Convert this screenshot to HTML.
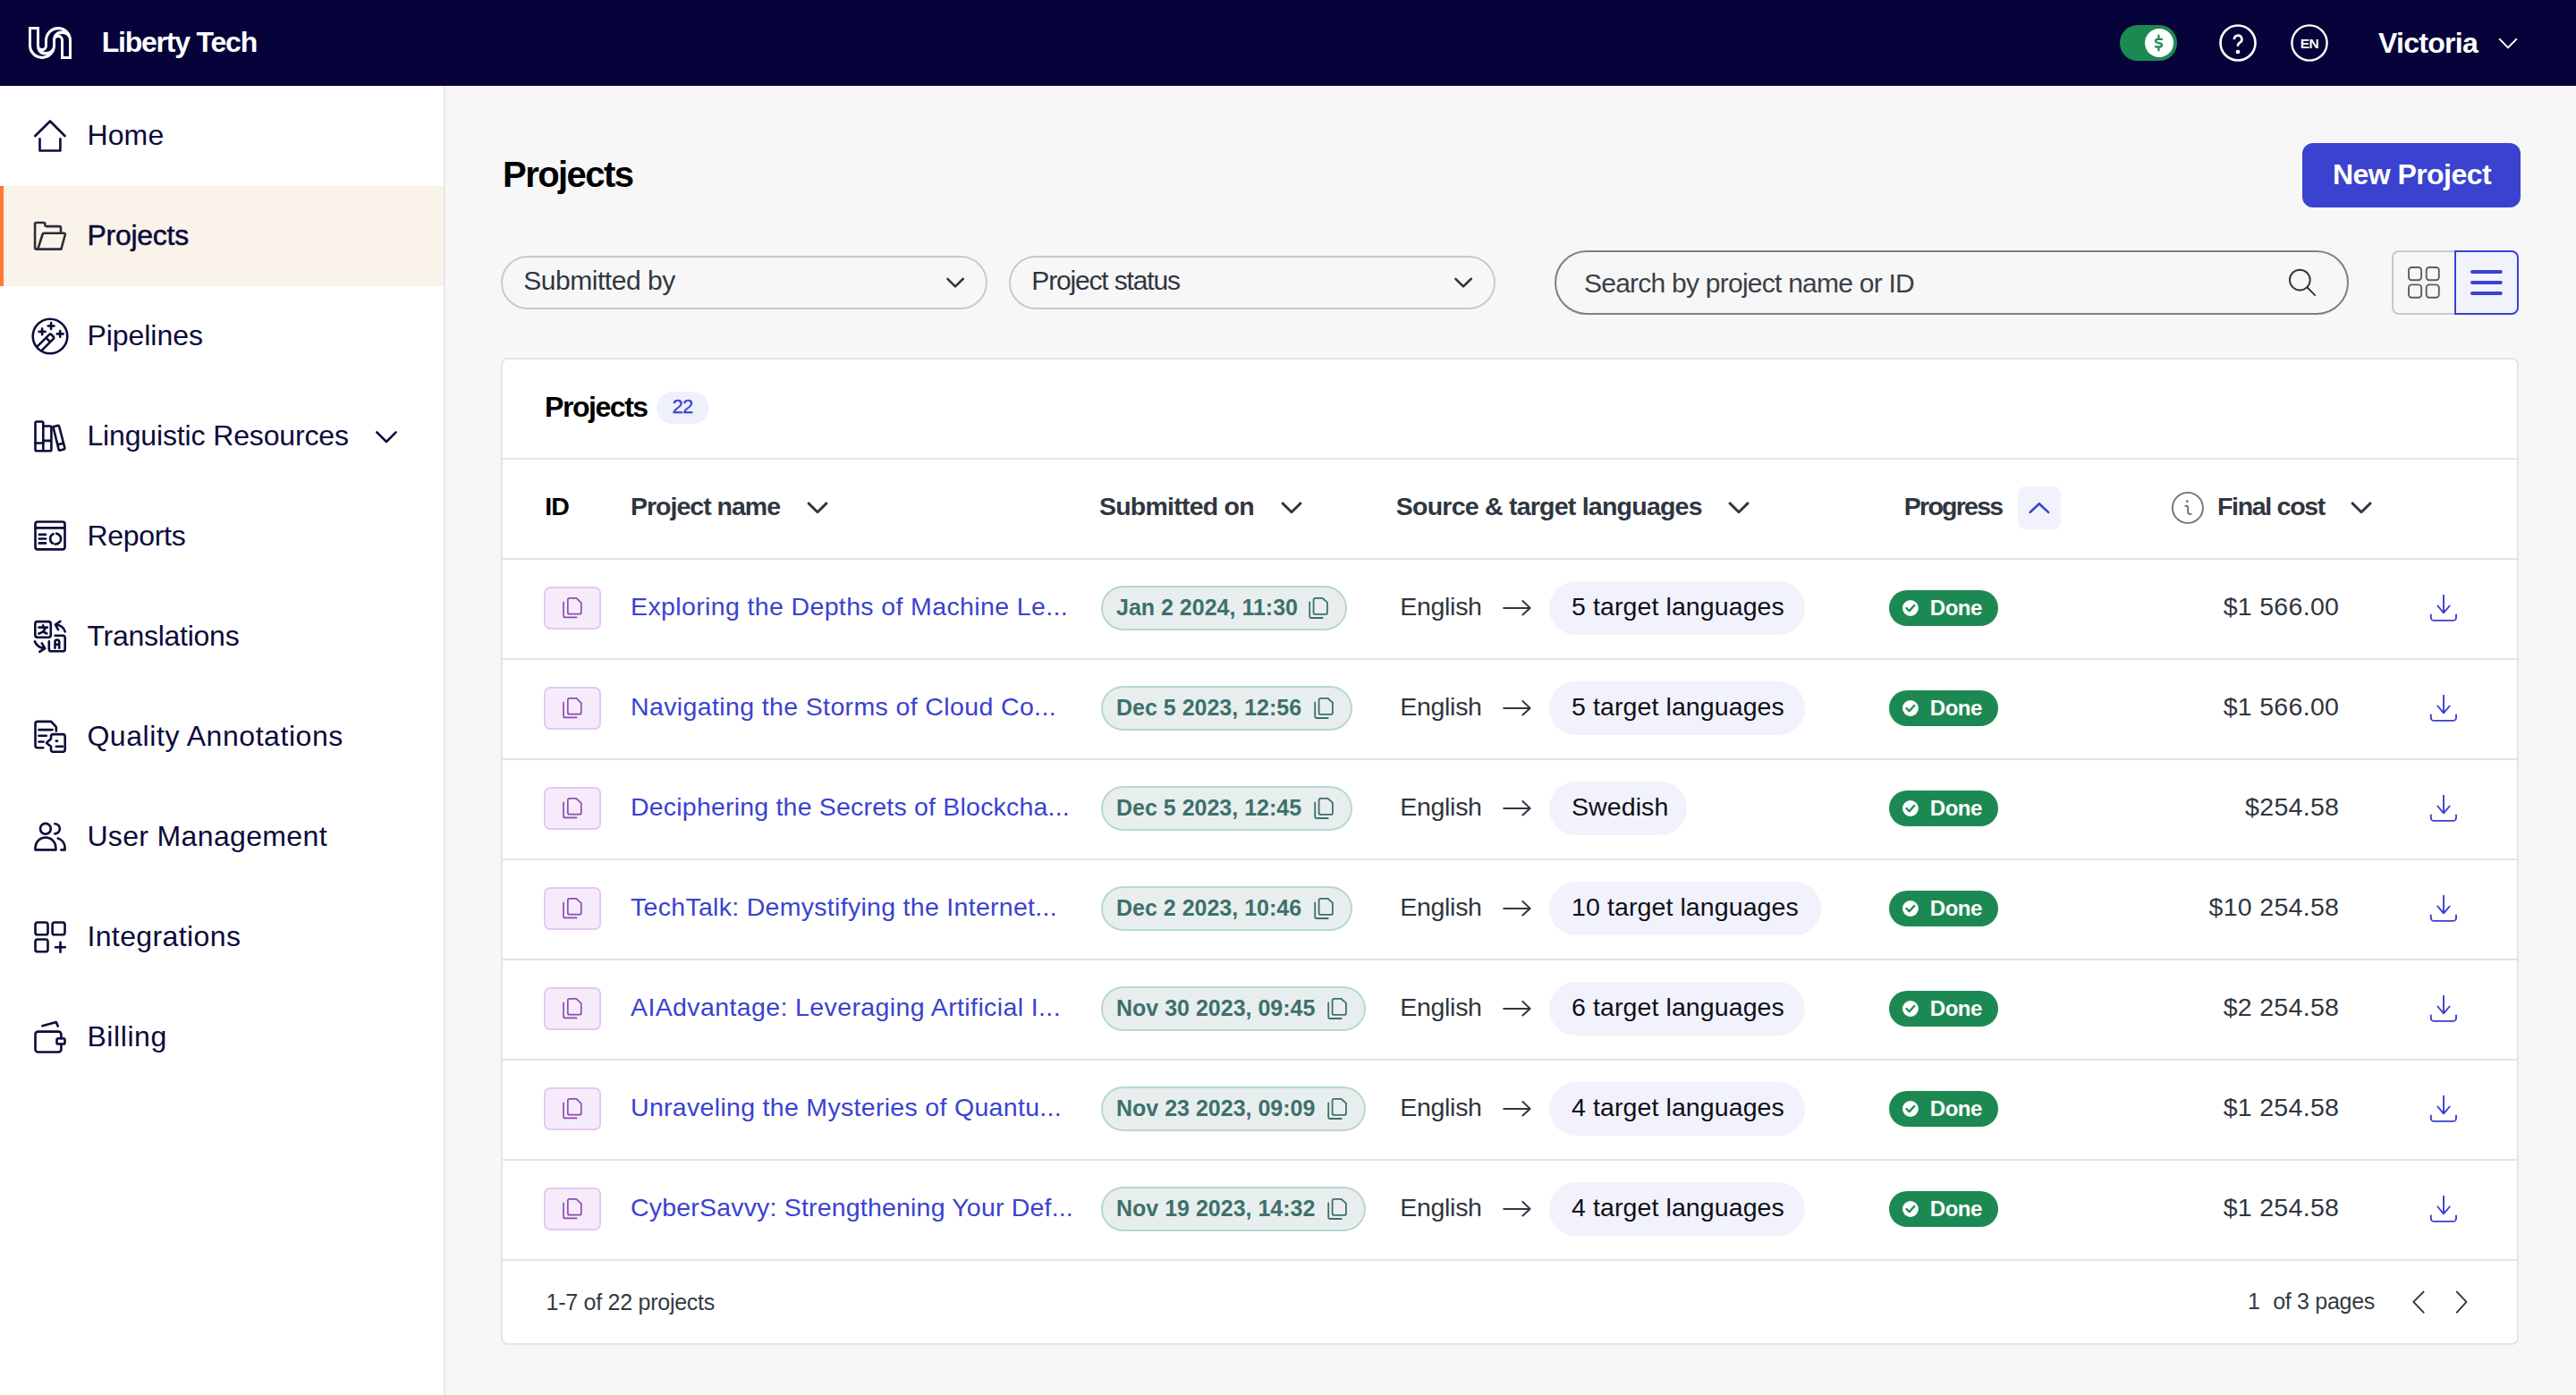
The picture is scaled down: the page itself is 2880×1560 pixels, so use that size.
<!DOCTYPE html>
<html>
<head>
<meta charset="utf-8">
<style>
*{box-sizing:border-box;margin:0;padding:0}
html,body{width:2880px;height:1560px;overflow:hidden}
body{background:#f7f7f7;font-family:"Liberation Sans",sans-serif;position:relative}
.t{position:absolute;white-space:nowrap}
.b{position:absolute}
svg{position:absolute;overflow:visible}
</style>
</head>
<body>

<div class="b" style="left:0;top:0;width:2880px;height:96px;background:#05033a"></div>
<svg style="left:32px;top:30px" width="48" height="36" viewBox="0 0 48 36">
<path fill="#fff" d="M0 0 H12 V21 A3 3 0 0 0 18 21 V18 H30 V21 A15 15 0 0 1 0 21 Z"/>
<path fill="#fff" d="M36 36 H48 V15 A15 15 0 0 0 18 15 V18 H30 V15 A3 3 0 0 1 36 15 Z"/>
<path fill="#05033a" d="M3 3 H9 V21 C9 27 13 32.5 20.4 31.4 A12 12 0 0 1 3 21 Z"/>
<path fill="#05033a" d="M21 18 H27 V21 C27 26.5 21.5 29.5 15.3 27.2 A6 6 0 0 0 21 21 Z"/>
<path fill="#05033a" d="M27 18 V15 C27 9 31 3.5 38.4 4.6 A12 12 0 0 0 21 15 V18 Z"/>
<path fill="#05033a" d="M39 33 H45 V15 C45 9.5 39.5 6.5 33.3 8.8 A6 6 0 0 1 39 15 Z"/>
</svg>
<div class="t" style="top:25.91px;font-size:32px;line-height:42px;color:#fff;font-weight:700;letter-spacing:-1.216px;left:113.70px;">Liberty Tech</div>
<div class="b" style="left:2370px;top:28px;width:64px;height:40px;border-radius:20px;background:#1d8952"></div>
<div class="b" style="left:2398px;top:32px;width:32px;height:32px;border-radius:16px;background:#fff"></div>
<svg style="left:2398px;top:32px" width="32" height="32" viewBox="0 0 32 32" fill="none" stroke="#1d8952" stroke-width="2.2" stroke-linecap="round" stroke-linejoin="round">
<path d="M15.4 7.6 V10.4 M15.4 21.4 V24.4 M19 11.8 H14.4 C12.8 11.8 12 12.7 12 13.8 C12 15.1 13 15.6 15.4 16.1 C18 16.6 19 17.3 19 18.5 C19 19.6 18.2 20.3 16.6 20.3 H11.9"/>
</svg>
<svg style="left:2480px;top:26px" width="44" height="44" viewBox="0 0 44 44" fill="none" stroke="#fff" stroke-width="2.6">
<circle cx="22" cy="22" r="19.5"/>
<path d="M17.9 18.2 A4.25 4.25 0 1 1 24.2 21.6 C22.6 22.5 22 23.1 22 24.6 V25.8" stroke-width="2.6" stroke-linecap="butt"/>
<circle cx="22" cy="32" r="2.3" fill="#fff" stroke="none"/>
</svg>
<svg style="left:2560px;top:26px" width="44" height="44" viewBox="0 0 44 44" fill="none" stroke="#fff" stroke-width="2.4">
<circle cx="22" cy="22" r="19.6"/>
</svg>
<div class="t" style="top:38.63px;font-size:15.5px;line-height:20px;color:#fff;font-weight:700;letter-spacing:-0.566px;left:2571.80px;">EN</div>
<div class="t" style="top:26.51px;font-size:32px;line-height:42px;color:#fff;font-weight:700;letter-spacing:-0.725px;left:2659.00px;">Victoria</div>
<svg style="left:2780px;top:30px" width="50" height="36" viewBox="0 0 50 36" fill="none" stroke="#fff" stroke-width="2" stroke-linecap="round" stroke-linejoin="round">
<path d="M14.8 13.9 L24 23.4 L33.3 13.9"/>
</svg>
<div class="b" style="left:0;top:96px;width:498px;height:1464px;background:#fff;border-right:2px solid #e8e8ec"></div>
<div class="b" style="left:0;top:208px;width:496px;height:112px;background:#faf3ea"></div>
<div class="b" style="left:0;top:208px;width:4px;height:112px;background:#ff7a2e"></div>
<svg style="left:30px;top:126px" width="52" height="52" viewBox="0 0 52 52" fill="none" stroke="#0b0b3b" stroke-width="2.6" stroke-linecap="round" stroke-linejoin="round"><path d="M9.3 26 L26 9.5 L42.5 26 M14.5 29.3 V42.5 H37.4 V29.3"/></svg>
<div class="t" style="top:129.81px;font-size:32px;line-height:42px;color:#0b0b3b;letter-spacing:0.159px;left:97.40px;">Home</div>
<svg style="left:30px;top:238px" width="52" height="52" viewBox="0 0 52 52" fill="none" stroke="#2a2f3a" stroke-width="2.6" stroke-linecap="round" stroke-linejoin="round"><path d="M12.3 40.6 H10.6 A1.5 1.5 0 0 1 9.1 39.1 V12.5 A1.5 1.5 0 0 1 10.6 11 H18.8 A1.5 1.5 0 0 1 20.3 12.5 V13.6 A1.5 1.5 0 0 0 21.8 15.1 H36.5 A1.5 1.5 0 0 1 38 16.6 V22.7"/><path d="M12.3 40.6 L17.6 24 A1.8 1.8 0 0 1 19.3 22.7 H41.5 A1.4 1.4 0 0 1 42.8 24.5 L38.4 40.6 Z"/></svg>
<div class="t" style="top:241.81px;font-size:32px;line-height:42px;color:#0b0b3b;letter-spacing:-0.250px;left:97.40px;-webkit-text-stroke:0.5px #0b0b3b;">Projects</div>
<svg style="left:30px;top:350px" width="52" height="52" viewBox="0 0 52 52" fill="none" stroke="#0b0b3b" stroke-width="2.6" stroke-linecap="round" stroke-linejoin="round"><circle cx="26" cy="26" r="19.3"/><path d="M27.1 11.1 V17.9 M23.7 14.5 H30.5 M17.1 17.5 V24.3 M13.7 20.9 H20.5 M37.2 20 V26.8 M33.8 23.4 H40.6"/><clipPath id="pc"><circle cx="26" cy="26" r="19.3"/></clipPath><g clip-path="url(#pc)"><g transform="matrix(0.7071 -0.7071 0.7071 0.7071 0 0)"><path d="M-22 34.79 H0.26 A2 2 0 0 1 2.26 36.79 V39.37 A2 2 0 0 1 0.26 41.37 H-22 M-4.45 34.79 V41.37"/></g></g></svg>
<div class="t" style="top:353.81px;font-size:32px;line-height:42px;color:#0b0b3b;letter-spacing:-0.041px;left:97.40px;">Pipelines</div>
<svg style="left:30px;top:462px" width="52" height="52" viewBox="0 0 52 52" fill="none" stroke="#0b0b3b" stroke-width="2.6" stroke-linecap="round" stroke-linejoin="round"><rect x="9.5" y="9.5" width="8.8" height="32.8" rx="1.6"/><path d="M9.5 33.5 H18.3"/><path d="M18.3 14.5 H25.8 A1.6 1.6 0 0 1 27.4 16.1 V40.7 A1.6 1.6 0 0 1 25.8 42.3 H18.3 M18.3 30.9 H27.4"/><path d="M29.4 15.2 L34.4 13.9 A1.5 1.5 0 0 1 36.2 15 L42.3 38.6 A1.5 1.5 0 0 1 41.2 40.4 L37.4 41.5 A1.5 1.5 0 0 1 35.6 40.4 Z M34.5 35.2 L40.4 33.7"/></svg>
<div class="t" style="top:465.81px;font-size:32px;line-height:42px;color:#0b0b3b;letter-spacing:-0.138px;left:97.40px;">Linguistic Resources</div>
<svg style="left:30px;top:574px" width="52" height="52" viewBox="0 0 52 52" fill="none" stroke="#0b0b3b" stroke-width="2.6" stroke-linecap="round" stroke-linejoin="round"><rect x="9.5" y="9.5" width="33" height="30.9" rx="2.6"/><path d="M9.5 16.4 H42.5 M13.8 23.7 H21.1 M13.8 28.5 H21.1 M13.8 33.4 H21.1"/><path d="M33.1 22.6 A6 6 0 0 1 37.74 30.55 M36.7 32.4 A6 6 0 0 1 31.58 34.48 M29.1 33.7 A6 6 0 0 1 29.56 23.06"/></svg>
<div class="t" style="top:577.81px;font-size:32px;line-height:42px;color:#0b0b3b;letter-spacing:-0.293px;left:97.40px;">Reports</div>
<svg style="left:30px;top:686px" width="52" height="52" viewBox="0 0 52 52" fill="none" stroke="#0b0b3b" stroke-width="2.6" stroke-linecap="round" stroke-linejoin="round"><rect x="9.3" y="9.1" width="17.5" height="17.6" rx="2.6"/><path d="M13.4 15.6 H22.9 M18.1 13.4 V15.6 M21 15.8 C19.5 19.8 17 21.8 13.4 22.6 M18.9 20.6 C20 21.4 21.2 22 22.4 22.4"/><path d="M42.8 20.3 C41.2 15.5 37.5 12.8 31.9 12.5 M37.4 8.9 L31.9 12.5 L35 18.2"/><path d="M31.5 24.8 H40.1 A2.6 2.6 0 0 1 42.7 27.4 V39.7 A2.6 2.6 0 0 1 40.1 42.3 H27.4 A2.6 2.6 0 0 1 24.8 39.7 V31.3"/><path d="M31.5 38.8 V31.8 A2.35 2.35 0 0 1 36.2 31.8 V38.8 M31.5 34.8 H36.2"/><path d="M8.9 31.3 C10.5 35.8 14.2 38.5 20.3 39.1 M16.8 33.4 L20.3 39.1 L14.3 42.9"/></svg>
<div class="t" style="top:689.81px;font-size:32px;line-height:42px;color:#0b0b3b;letter-spacing:-0.260px;left:97.40px;">Translations</div>
<svg style="left:30px;top:798px" width="52" height="52" viewBox="0 0 52 52" fill="none" stroke="#0b0b3b" stroke-width="2.6" stroke-linecap="round" stroke-linejoin="round"><path d="M18.3 38.2 H12 A2.5 2.5 0 0 1 9.5 35.7 V11.4 A2.5 2.5 0 0 1 12 8.9 H27.2 L32.8 14.9 V19.4"/><path d="M13.4 18.1 H28.5 M13.4 24.8 H21.8 M13.4 31.5 H18.6"/><path d="M27 28.3 V25.6 A2.5 2.5 0 0 1 29.5 23.1 H40.2 A2.5 2.5 0 0 1 42.7 25.6 V40.2 A2.5 2.5 0 0 1 40.2 42.7 H29.5 A2.5 2.5 0 0 1 27 40.2 V36.7 L22.4 33.3 A0.6 0.6 0 0 1 22.4 32.3 Z"/><path d="M32.8 30.6 H34.1 M32.8 36.7 H39.9"/></svg>
<div class="t" style="top:801.81px;font-size:32px;line-height:42px;color:#0b0b3b;letter-spacing:0.566px;left:97.40px;">Quality Annotations</div>
<svg style="left:30px;top:910px" width="52" height="52" viewBox="0 0 52 52" fill="none" stroke="#0b0b3b" stroke-width="2.6" stroke-linecap="round" stroke-linejoin="round"><circle cx="20.9" cy="16.8" r="5.9"/><path d="M9.5 40.4 V38 A11.45 11.45 0 0 1 32.4 38 V40.4 Z"/><path d="M31.3 11.2 A5.6 5.6 0 0 1 31.3 22.4"/><path d="M34.8 27.4 A11 11 0 0 1 42.5 37.5 V40.4 H38.4"/></svg>
<div class="t" style="top:913.81px;font-size:32px;line-height:42px;color:#0b0b3b;letter-spacing:0.350px;left:97.40px;">User Management</div>
<svg style="left:30px;top:1022px" width="52" height="52" viewBox="0 0 52 52" fill="none" stroke="#0b0b3b" stroke-width="2.6" stroke-linecap="round" stroke-linejoin="round"><rect x="9.5" y="9.5" width="14" height="13.8" rx="2.6"/><rect x="28.6" y="9.5" width="13.9" height="13.8" rx="2.6"/><rect x="9.5" y="28.5" width="14" height="13.8" rx="2.6"/><path d="M37.5 31.9 V42.8 M32 37.3 H42.8"/></svg>
<div class="t" style="top:1025.81px;font-size:32px;line-height:42px;color:#0b0b3b;letter-spacing:0.398px;left:97.40px;">Integrations</div>
<svg style="left:30px;top:1134px" width="52" height="52" viewBox="0 0 52 52" fill="none" stroke="#0b0b3b" stroke-width="2.6" stroke-linecap="round" stroke-linejoin="round"><path d="M38.4 27.2 V22.6 A3 3 0 0 0 35.4 19.6 H12.5 A3 3 0 0 0 9.5 22.6 V39.5 A3 3 0 0 0 12.5 42.5 H35.4 A3 3 0 0 0 38.4 39.5 V33.5"/><rect x="33.5" y="27.2" width="9" height="6.3" rx="1.6"/><path d="M17.3 13.2 L32.8 9.1 L34.7 13.6"/></svg>
<div class="t" style="top:1137.81px;font-size:32px;line-height:42px;color:#0b0b3b;letter-spacing:0.589px;left:97.40px;">Billing</div>
<svg style="left:410px;top:470px" width="44" height="36" viewBox="0 0 44 36" fill="none" stroke="#0b0b3b" stroke-width="2.6" stroke-linecap="round" stroke-linejoin="round"><path d="M11.3 13.3 L22 24 L32.6 13.3"/></svg>
<div class="t" style="top:168.74px;font-size:40px;line-height:52px;color:#000;font-weight:700;letter-spacing:-1.545px;left:562.00px;">Projects</div>
<div class="b" style="left:2574px;top:160px;width:244px;height:72px;border-radius:12px;background:#3a42cf"></div>
<div class="t" style="top:174.21px;font-size:32px;line-height:42px;color:#fff;font-weight:700;letter-spacing:-0.561px;left:2608.00px;">New Project</div>
<div class="b" style="left:560px;top:286px;width:544px;height:60px;border:2px solid #cacacd;border-radius:30px"></div>
<div class="t" style="top:294.11px;font-size:30px;line-height:39px;color:#2f3640;letter-spacing:-0.466px;left:585.30px;">Submitted by</div>
<svg style="left:1040px;top:296px" width="50" height="40" viewBox="0 0 50 40" fill="none" stroke="#2f3640" stroke-width="2.6" stroke-linecap="round" stroke-linejoin="round"><path d="M19.4 15.8 L28 24.4 L36.8 15.8"/></svg>
<div class="b" style="left:1128px;top:286px;width:544px;height:60px;border:2px solid #cacacd;border-radius:30px"></div>
<div class="t" style="top:294.11px;font-size:30px;line-height:39px;color:#2f3640;letter-spacing:-1.160px;left:1153.30px;">Project status</div>
<svg style="left:1608px;top:296px" width="50" height="40" viewBox="0 0 50 40" fill="none" stroke="#2f3640" stroke-width="2.6" stroke-linecap="round" stroke-linejoin="round"><path d="M19.4 15.8 L28 24.4 L36.8 15.8"/></svg>
<div class="b" style="left:1738px;top:280px;width:888px;height:72px;border:2px solid #7c7f85;border-radius:36px"></div>
<div class="t" style="top:296.50px;font-size:30px;line-height:39px;color:#3a3f47;letter-spacing:-0.757px;left:1771.00px;">Search by project name or ID</div>
<svg style="left:2550px;top:292px" width="50" height="50" viewBox="0 0 50 50" fill="none" stroke="#2f3640" stroke-width="1.9" stroke-linecap="round"><circle cx="21.3" cy="21.1" r="11.4"/><path d="M29.6 29.5 L38.2 38.1"/></svg>
<div class="b" style="left:2674px;top:280px;width:72px;height:72px;border:2px solid #c9c9cc;border-right:none;border-radius:8px 0 0 8px"></div>
<div class="b" style="left:2744px;top:280px;width:72px;height:72px;border:2px solid #3a42cf;border-radius:0 8px 8px 0;background:#f1f2fc"></div>
<svg style="left:2680px;top:288px" width="130" height="56" viewBox="0 0 130 56" fill="none" stroke="#5b5f66" stroke-width="1.9"><rect x="13" y="11" width="14.1" height="14.3" rx="3.2"/><rect x="32.7" y="11" width="14.1" height="14.3" rx="3.2"/><rect x="13" y="30.4" width="14.1" height="14.4" rx="3.2"/><rect x="32.7" y="30.4" width="14.1" height="14.4" rx="3.2"/><path d="M84 15.9 H115.8 M84 28 H115.8 M84 39.9 H115.8" stroke="#3a42cf" stroke-width="4" stroke-linecap="round"/></svg>
<div class="b" style="left:560px;top:400px;width:2256px;height:1104px;background:#fff;border:2px solid #e4e4e4;border-radius:8px"></div>
<div class="b" style="left:562px;top:512px;width:2252px;height:2px;background:#e3e3e3"></div>
<div class="b" style="left:562px;top:624px;width:2252px;height:2px;background:#e3e3e3"></div>
<div class="b" style="left:562px;top:736px;width:2252px;height:2px;background:#e3e3e3"></div>
<div class="b" style="left:562px;top:848px;width:2252px;height:2px;background:#e3e3e3"></div>
<div class="b" style="left:562px;top:960px;width:2252px;height:2px;background:#e3e3e3"></div>
<div class="b" style="left:562px;top:1072px;width:2252px;height:2px;background:#e3e3e3"></div>
<div class="b" style="left:562px;top:1184px;width:2252px;height:2px;background:#e3e3e3"></div>
<div class="b" style="left:562px;top:1296px;width:2252px;height:2px;background:#e3e3e3"></div>
<div class="b" style="left:562px;top:1408px;width:2252px;height:2px;background:#e3e3e3"></div>
<div class="t" style="top:434.41px;font-size:32px;line-height:42px;color:#000;font-weight:700;letter-spacing:-1.448px;left:609.00px;">Projects</div>
<div class="b" style="left:734px;top:438px;width:58px;height:36px;border-radius:18px;background:#eef0fc"></div>
<div class="t" style="top:440.48px;font-size:22px;line-height:29px;color:#3a42cf;letter-spacing:-0.886px;left:751.60px;-webkit-text-stroke:0.3px #3a42cf;">22</div>
<div class="t" style="top:548.02px;font-size:28.5px;line-height:37px;color:#000;font-weight:700;letter-spacing:-0.750px;left:609.20px;">ID</div>
<div class="t" style="top:548.02px;font-size:28.5px;line-height:37px;color:#2f3640;font-weight:700;letter-spacing:-0.999px;left:705.00px;">Project name</div>
<svg style="left:889.0px;top:548px" width="50" height="40" viewBox="0 0 50 40" fill="none" stroke="#2f3640" stroke-width="2.9" stroke-linecap="round" stroke-linejoin="round"><path d="M15 14.9 L25 24.7 L35 14.9"/></svg>
<div class="t" style="top:548.02px;font-size:28.5px;line-height:37px;color:#2f3640;font-weight:700;letter-spacing:-0.756px;left:1228.90px;">Submitted on</div>
<svg style="left:1419.0px;top:548px" width="50" height="40" viewBox="0 0 50 40" fill="none" stroke="#2f3640" stroke-width="2.9" stroke-linecap="round" stroke-linejoin="round"><path d="M15 14.9 L25 24.7 L35 14.9"/></svg>
<div class="t" style="top:548.02px;font-size:28.5px;line-height:37px;color:#2f3640;font-weight:700;letter-spacing:-0.764px;left:1560.80px;">Source &amp; target languages</div>
<svg style="left:1918.8px;top:548px" width="50" height="40" viewBox="0 0 50 40" fill="none" stroke="#2f3640" stroke-width="2.9" stroke-linecap="round" stroke-linejoin="round"><path d="M15 14.9 L25 24.7 L35 14.9"/></svg>
<div class="t" style="top:548.02px;font-size:28.5px;line-height:37px;color:#2f3640;font-weight:700;letter-spacing:-1.745px;left:2128.80px;">Progress</div>
<div class="b" style="left:2256px;top:544px;width:48px;height:48px;border-radius:8px;background:#f1f2fc"></div>
<svg style="left:2250px;top:540px" width="60" height="56" viewBox="0 0 60 56" fill="none" stroke="#3a42cf" stroke-width="2.6" stroke-linecap="round" stroke-linejoin="round"><path d="M19.7 32.9 L29.9 23.3 L40.1 32.9"/></svg>
<svg style="left:2420px;top:540px" width="60" height="56" viewBox="0 0 60 56" fill="none" stroke="#6e737a" stroke-width="1.9" stroke-linecap="round" stroke-linejoin="round"><circle cx="25.9" cy="27.9" r="17"/><circle cx="25.3" cy="20.7" r="1.4" fill="#6e737a" stroke="none"/><path d="M23.3 25.7 H24.6 A1.5 1.5 0 0 1 26.1 27.2 V31.9 A3 3 0 0 0 29.1 34.9 H29.7"/></svg>
<div class="t" style="top:548.02px;font-size:28.5px;line-height:37px;color:#2f3640;font-weight:700;letter-spacing:-1.303px;left:2479.00px;">Final cost</div>
<svg style="left:2614.5px;top:548px" width="50" height="40" viewBox="0 0 50 40" fill="none" stroke="#2f3640" stroke-width="2.9" stroke-linecap="round" stroke-linejoin="round"><path d="M15 14.9 L25 24.7 L35 14.9"/></svg>
<div class="b" style="left:608px;top:656px;width:64px;height:48px;border:2px solid #e6c8f2;border-radius:7px;background:#f6ebfb"></div>
<svg style="left:604px;top:650px" width="72" height="60" viewBox="0 0 72 60" fill="none" stroke="#8c4caf" stroke-width="1.7" stroke-linecap="round" stroke-linejoin="round"><path d="M32.6 18.9 H40.4 L45.8 24.1 V34.7 A2 2 0 0 1 43.8 36.7 H32.8 A2 2 0 0 1 30.8 34.7 V20.9 A2 2 0 0 1 32.8 18.9 Z"/><path d="M26 23.4 V38.4 A2 2 0 0 0 28 40.4 H40.6"/></svg>
<div class="t" style="top:659.52px;font-size:28.5px;line-height:37px;color:#3a42cf;letter-spacing:0.371px;left:705.00px;">Exploring the Depths of Machine Le...</div>
<div class="b" style="left:1231px;top:655px;width:275px;height:50px;border:2px solid #b9d7d1;border-radius:25px;background:#e8eeee"></div>
<div class="t" style="top:663.24px;font-size:25px;line-height:32px;color:#3e706b;font-weight:700;left:1248.00px;">Jan 2 2024, 11:30</div>
<svg style="left:1450px;top:655px" width="60" height="50" viewBox="0 0 60 50" fill="none" stroke="#3e706b" stroke-width="1.8" stroke-linecap="round" stroke-linejoin="round"><path d="M20.6 13.8 H28.3 L33.9 18.6 V29.9 A2 2 0 0 1 31.9 31.9 H20.6 A2 2 0 0 1 18.6 29.9 V15.8 A2 2 0 0 1 20.6 13.8 Z"/><path d="M14.2 18.5 V34 A2 2 0 0 0 16.2 36 H28.7"/></svg>
<div class="t" style="top:659.52px;font-size:28.5px;line-height:37px;color:#2f3640;letter-spacing:-0.283px;left:1565.20px;">English</div>
<svg style="left:1670px;top:660px" width="50" height="40" viewBox="0 0 50 40" fill="none" stroke="#2f3640" stroke-width="2" stroke-linecap="round" stroke-linejoin="round"><path d="M11.2 19.9 H40.4 M32.4 12 L40.6 19.9 L32.4 27.5"/></svg>
<div class="b" style="left:1732px;top:650px;width:286px;height:60px;border-radius:30px;background:#f1f2fc"></div>
<div class="t" style="top:659.52px;font-size:28.5px;line-height:37px;color:#101018;left:1757.00px;letter-spacing:0.1px;">5 target languages</div>
<div class="b" style="left:2112px;top:660px;width:122px;height:40px;border-radius:20px;background:#1d8952"></div>
<svg style="left:2106px;top:655px" width="60" height="50" viewBox="0 0 60 50"><circle cx="29.9" cy="25" r="8.9" fill="#fff"/><path d="M25.5 25 L28.6 28.2 L34.2 21.9" fill="none" stroke="#1d8952" stroke-width="2.3" stroke-linecap="round" stroke-linejoin="round"/></svg>
<div class="t" style="top:664.08px;font-size:24px;line-height:31px;color:#fff;font-weight:700;letter-spacing:-0.500px;left:2157.80px;">Done</div>
<div class="t" style="top:659.52px;font-size:28.5px;line-height:37px;color:#2f3640;right:264.80px;letter-spacing:0.3px;">$1 566.00</div>
<svg style="left:2700px;top:650px" width="60" height="60" viewBox="0 0 60 60" fill="none" stroke="#3a3fd0" stroke-width="1.9" stroke-linecap="round" stroke-linejoin="round"><path d="M32 15.7 V35.3 M25.4 27.5 L32 35.3 L38.7 27.5 M17.8 37.4 V40.4 A3.5 3.5 0 0 0 21.3 43.9 H42.5 A3.5 3.5 0 0 0 46 40.4 V37.4"/></svg>
<div class="b" style="left:608px;top:768px;width:64px;height:48px;border:2px solid #e6c8f2;border-radius:7px;background:#f6ebfb"></div>
<svg style="left:604px;top:762px" width="72" height="60" viewBox="0 0 72 60" fill="none" stroke="#8c4caf" stroke-width="1.7" stroke-linecap="round" stroke-linejoin="round"><path d="M32.6 18.9 H40.4 L45.8 24.1 V34.7 A2 2 0 0 1 43.8 36.7 H32.8 A2 2 0 0 1 30.8 34.7 V20.9 A2 2 0 0 1 32.8 18.9 Z"/><path d="M26 23.4 V38.4 A2 2 0 0 0 28 40.4 H40.6"/></svg>
<div class="t" style="top:771.52px;font-size:28.5px;line-height:37px;color:#3a42cf;letter-spacing:0.373px;left:705.00px;">Navigating the Storms of Cloud Co...</div>
<div class="b" style="left:1231px;top:767px;width:281px;height:50px;border:2px solid #b9d7d1;border-radius:25px;background:#e8eeee"></div>
<div class="t" style="top:775.24px;font-size:25px;line-height:32px;color:#3e706b;font-weight:700;left:1248.00px;">Dec 5 2023, 12:56</div>
<svg style="left:1456px;top:767px" width="60" height="50" viewBox="0 0 60 50" fill="none" stroke="#3e706b" stroke-width="1.8" stroke-linecap="round" stroke-linejoin="round"><path d="M20.6 13.8 H28.3 L33.9 18.6 V29.9 A2 2 0 0 1 31.9 31.9 H20.6 A2 2 0 0 1 18.6 29.9 V15.8 A2 2 0 0 1 20.6 13.8 Z"/><path d="M14.2 18.5 V34 A2 2 0 0 0 16.2 36 H28.7"/></svg>
<div class="t" style="top:771.52px;font-size:28.5px;line-height:37px;color:#2f3640;letter-spacing:-0.283px;left:1565.20px;">English</div>
<svg style="left:1670px;top:772px" width="50" height="40" viewBox="0 0 50 40" fill="none" stroke="#2f3640" stroke-width="2" stroke-linecap="round" stroke-linejoin="round"><path d="M11.2 19.9 H40.4 M32.4 12 L40.6 19.9 L32.4 27.5"/></svg>
<div class="b" style="left:1732px;top:762px;width:286px;height:60px;border-radius:30px;background:#f1f2fc"></div>
<div class="t" style="top:771.52px;font-size:28.5px;line-height:37px;color:#101018;left:1757.00px;letter-spacing:0.1px;">5 target languages</div>
<div class="b" style="left:2112px;top:772px;width:122px;height:40px;border-radius:20px;background:#1d8952"></div>
<svg style="left:2106px;top:767px" width="60" height="50" viewBox="0 0 60 50"><circle cx="29.9" cy="25" r="8.9" fill="#fff"/><path d="M25.5 25 L28.6 28.2 L34.2 21.9" fill="none" stroke="#1d8952" stroke-width="2.3" stroke-linecap="round" stroke-linejoin="round"/></svg>
<div class="t" style="top:776.08px;font-size:24px;line-height:31px;color:#fff;font-weight:700;letter-spacing:-0.500px;left:2157.80px;">Done</div>
<div class="t" style="top:771.52px;font-size:28.5px;line-height:37px;color:#2f3640;right:264.80px;letter-spacing:0.3px;">$1 566.00</div>
<svg style="left:2700px;top:762px" width="60" height="60" viewBox="0 0 60 60" fill="none" stroke="#3a3fd0" stroke-width="1.9" stroke-linecap="round" stroke-linejoin="round"><path d="M32 15.7 V35.3 M25.4 27.5 L32 35.3 L38.7 27.5 M17.8 37.4 V40.4 A3.5 3.5 0 0 0 21.3 43.9 H42.5 A3.5 3.5 0 0 0 46 40.4 V37.4"/></svg>
<div class="b" style="left:608px;top:880px;width:64px;height:48px;border:2px solid #e6c8f2;border-radius:7px;background:#f6ebfb"></div>
<svg style="left:604px;top:874px" width="72" height="60" viewBox="0 0 72 60" fill="none" stroke="#8c4caf" stroke-width="1.7" stroke-linecap="round" stroke-linejoin="round"><path d="M32.6 18.9 H40.4 L45.8 24.1 V34.7 A2 2 0 0 1 43.8 36.7 H32.8 A2 2 0 0 1 30.8 34.7 V20.9 A2 2 0 0 1 32.8 18.9 Z"/><path d="M26 23.4 V38.4 A2 2 0 0 0 28 40.4 H40.6"/></svg>
<div class="t" style="top:883.52px;font-size:28.5px;line-height:37px;color:#3a42cf;letter-spacing:0.206px;left:705.00px;">Deciphering the Secrets of Blockcha...</div>
<div class="b" style="left:1231px;top:879px;width:281px;height:50px;border:2px solid #b9d7d1;border-radius:25px;background:#e8eeee"></div>
<div class="t" style="top:887.24px;font-size:25px;line-height:32px;color:#3e706b;font-weight:700;left:1248.00px;">Dec 5 2023, 12:45</div>
<svg style="left:1456px;top:879px" width="60" height="50" viewBox="0 0 60 50" fill="none" stroke="#3e706b" stroke-width="1.8" stroke-linecap="round" stroke-linejoin="round"><path d="M20.6 13.8 H28.3 L33.9 18.6 V29.9 A2 2 0 0 1 31.9 31.9 H20.6 A2 2 0 0 1 18.6 29.9 V15.8 A2 2 0 0 1 20.6 13.8 Z"/><path d="M14.2 18.5 V34 A2 2 0 0 0 16.2 36 H28.7"/></svg>
<div class="t" style="top:883.52px;font-size:28.5px;line-height:37px;color:#2f3640;letter-spacing:-0.283px;left:1565.20px;">English</div>
<svg style="left:1670px;top:884px" width="50" height="40" viewBox="0 0 50 40" fill="none" stroke="#2f3640" stroke-width="2" stroke-linecap="round" stroke-linejoin="round"><path d="M11.2 19.9 H40.4 M32.4 12 L40.6 19.9 L32.4 27.5"/></svg>
<div class="b" style="left:1732px;top:874px;width:154px;height:60px;border-radius:30px;background:#f1f2fc"></div>
<div class="t" style="top:883.52px;font-size:28.5px;line-height:37px;color:#101018;left:1757.00px;letter-spacing:0.1px;">Swedish</div>
<div class="b" style="left:2112px;top:884px;width:122px;height:40px;border-radius:20px;background:#1d8952"></div>
<svg style="left:2106px;top:879px" width="60" height="50" viewBox="0 0 60 50"><circle cx="29.9" cy="25" r="8.9" fill="#fff"/><path d="M25.5 25 L28.6 28.2 L34.2 21.9" fill="none" stroke="#1d8952" stroke-width="2.3" stroke-linecap="round" stroke-linejoin="round"/></svg>
<div class="t" style="top:888.08px;font-size:24px;line-height:31px;color:#fff;font-weight:700;letter-spacing:-0.500px;left:2157.80px;">Done</div>
<div class="t" style="top:883.52px;font-size:28.5px;line-height:37px;color:#2f3640;right:264.80px;letter-spacing:0.3px;">$254.58</div>
<svg style="left:2700px;top:874px" width="60" height="60" viewBox="0 0 60 60" fill="none" stroke="#3a3fd0" stroke-width="1.9" stroke-linecap="round" stroke-linejoin="round"><path d="M32 15.7 V35.3 M25.4 27.5 L32 35.3 L38.7 27.5 M17.8 37.4 V40.4 A3.5 3.5 0 0 0 21.3 43.9 H42.5 A3.5 3.5 0 0 0 46 40.4 V37.4"/></svg>
<div class="b" style="left:608px;top:992px;width:64px;height:48px;border:2px solid #e6c8f2;border-radius:7px;background:#f6ebfb"></div>
<svg style="left:604px;top:986px" width="72" height="60" viewBox="0 0 72 60" fill="none" stroke="#8c4caf" stroke-width="1.7" stroke-linecap="round" stroke-linejoin="round"><path d="M32.6 18.9 H40.4 L45.8 24.1 V34.7 A2 2 0 0 1 43.8 36.7 H32.8 A2 2 0 0 1 30.8 34.7 V20.9 A2 2 0 0 1 32.8 18.9 Z"/><path d="M26 23.4 V38.4 A2 2 0 0 0 28 40.4 H40.6"/></svg>
<div class="t" style="top:995.52px;font-size:28.5px;line-height:37px;color:#3a42cf;letter-spacing:0.297px;left:705.00px;">TechTalk: Demystifying the Internet...</div>
<div class="b" style="left:1231px;top:991px;width:281px;height:50px;border:2px solid #b9d7d1;border-radius:25px;background:#e8eeee"></div>
<div class="t" style="top:999.24px;font-size:25px;line-height:32px;color:#3e706b;font-weight:700;left:1248.00px;">Dec 2 2023, 10:46</div>
<svg style="left:1456px;top:991px" width="60" height="50" viewBox="0 0 60 50" fill="none" stroke="#3e706b" stroke-width="1.8" stroke-linecap="round" stroke-linejoin="round"><path d="M20.6 13.8 H28.3 L33.9 18.6 V29.9 A2 2 0 0 1 31.9 31.9 H20.6 A2 2 0 0 1 18.6 29.9 V15.8 A2 2 0 0 1 20.6 13.8 Z"/><path d="M14.2 18.5 V34 A2 2 0 0 0 16.2 36 H28.7"/></svg>
<div class="t" style="top:995.52px;font-size:28.5px;line-height:37px;color:#2f3640;letter-spacing:-0.283px;left:1565.20px;">English</div>
<svg style="left:1670px;top:996px" width="50" height="40" viewBox="0 0 50 40" fill="none" stroke="#2f3640" stroke-width="2" stroke-linecap="round" stroke-linejoin="round"><path d="M11.2 19.9 H40.4 M32.4 12 L40.6 19.9 L32.4 27.5"/></svg>
<div class="b" style="left:1732px;top:986px;width:304px;height:60px;border-radius:30px;background:#f1f2fc"></div>
<div class="t" style="top:995.52px;font-size:28.5px;line-height:37px;color:#101018;left:1757.00px;letter-spacing:0.1px;">10 target languages</div>
<div class="b" style="left:2112px;top:996px;width:122px;height:40px;border-radius:20px;background:#1d8952"></div>
<svg style="left:2106px;top:991px" width="60" height="50" viewBox="0 0 60 50"><circle cx="29.9" cy="25" r="8.9" fill="#fff"/><path d="M25.5 25 L28.6 28.2 L34.2 21.9" fill="none" stroke="#1d8952" stroke-width="2.3" stroke-linecap="round" stroke-linejoin="round"/></svg>
<div class="t" style="top:1000.08px;font-size:24px;line-height:31px;color:#fff;font-weight:700;letter-spacing:-0.500px;left:2157.80px;">Done</div>
<div class="t" style="top:995.52px;font-size:28.5px;line-height:37px;color:#2f3640;right:264.80px;letter-spacing:0.3px;">$10 254.58</div>
<svg style="left:2700px;top:986px" width="60" height="60" viewBox="0 0 60 60" fill="none" stroke="#3a3fd0" stroke-width="1.9" stroke-linecap="round" stroke-linejoin="round"><path d="M32 15.7 V35.3 M25.4 27.5 L32 35.3 L38.7 27.5 M17.8 37.4 V40.4 A3.5 3.5 0 0 0 21.3 43.9 H42.5 A3.5 3.5 0 0 0 46 40.4 V37.4"/></svg>
<div class="b" style="left:608px;top:1104px;width:64px;height:48px;border:2px solid #e6c8f2;border-radius:7px;background:#f6ebfb"></div>
<svg style="left:604px;top:1098px" width="72" height="60" viewBox="0 0 72 60" fill="none" stroke="#8c4caf" stroke-width="1.7" stroke-linecap="round" stroke-linejoin="round"><path d="M32.6 18.9 H40.4 L45.8 24.1 V34.7 A2 2 0 0 1 43.8 36.7 H32.8 A2 2 0 0 1 30.8 34.7 V20.9 A2 2 0 0 1 32.8 18.9 Z"/><path d="M26 23.4 V38.4 A2 2 0 0 0 28 40.4 H40.6"/></svg>
<div class="t" style="top:1107.52px;font-size:28.5px;line-height:37px;color:#3a42cf;letter-spacing:0.390px;left:705.00px;">AIAdvantage: Leveraging Artificial I...</div>
<div class="b" style="left:1231px;top:1103px;width:296px;height:50px;border:2px solid #b9d7d1;border-radius:25px;background:#e8eeee"></div>
<div class="t" style="top:1111.24px;font-size:25px;line-height:32px;color:#3e706b;font-weight:700;left:1248.00px;">Nov 30 2023, 09:45</div>
<svg style="left:1471px;top:1103px" width="60" height="50" viewBox="0 0 60 50" fill="none" stroke="#3e706b" stroke-width="1.8" stroke-linecap="round" stroke-linejoin="round"><path d="M20.6 13.8 H28.3 L33.9 18.6 V29.9 A2 2 0 0 1 31.9 31.9 H20.6 A2 2 0 0 1 18.6 29.9 V15.8 A2 2 0 0 1 20.6 13.8 Z"/><path d="M14.2 18.5 V34 A2 2 0 0 0 16.2 36 H28.7"/></svg>
<div class="t" style="top:1107.52px;font-size:28.5px;line-height:37px;color:#2f3640;letter-spacing:-0.283px;left:1565.20px;">English</div>
<svg style="left:1670px;top:1108px" width="50" height="40" viewBox="0 0 50 40" fill="none" stroke="#2f3640" stroke-width="2" stroke-linecap="round" stroke-linejoin="round"><path d="M11.2 19.9 H40.4 M32.4 12 L40.6 19.9 L32.4 27.5"/></svg>
<div class="b" style="left:1732px;top:1098px;width:286px;height:60px;border-radius:30px;background:#f1f2fc"></div>
<div class="t" style="top:1107.52px;font-size:28.5px;line-height:37px;color:#101018;left:1757.00px;letter-spacing:0.1px;">6 target languages</div>
<div class="b" style="left:2112px;top:1108px;width:122px;height:40px;border-radius:20px;background:#1d8952"></div>
<svg style="left:2106px;top:1103px" width="60" height="50" viewBox="0 0 60 50"><circle cx="29.9" cy="25" r="8.9" fill="#fff"/><path d="M25.5 25 L28.6 28.2 L34.2 21.9" fill="none" stroke="#1d8952" stroke-width="2.3" stroke-linecap="round" stroke-linejoin="round"/></svg>
<div class="t" style="top:1112.08px;font-size:24px;line-height:31px;color:#fff;font-weight:700;letter-spacing:-0.500px;left:2157.80px;">Done</div>
<div class="t" style="top:1107.52px;font-size:28.5px;line-height:37px;color:#2f3640;right:264.80px;letter-spacing:0.3px;">$2 254.58</div>
<svg style="left:2700px;top:1098px" width="60" height="60" viewBox="0 0 60 60" fill="none" stroke="#3a3fd0" stroke-width="1.9" stroke-linecap="round" stroke-linejoin="round"><path d="M32 15.7 V35.3 M25.4 27.5 L32 35.3 L38.7 27.5 M17.8 37.4 V40.4 A3.5 3.5 0 0 0 21.3 43.9 H42.5 A3.5 3.5 0 0 0 46 40.4 V37.4"/></svg>
<div class="b" style="left:608px;top:1216px;width:64px;height:48px;border:2px solid #e6c8f2;border-radius:7px;background:#f6ebfb"></div>
<svg style="left:604px;top:1210px" width="72" height="60" viewBox="0 0 72 60" fill="none" stroke="#8c4caf" stroke-width="1.7" stroke-linecap="round" stroke-linejoin="round"><path d="M32.6 18.9 H40.4 L45.8 24.1 V34.7 A2 2 0 0 1 43.8 36.7 H32.8 A2 2 0 0 1 30.8 34.7 V20.9 A2 2 0 0 1 32.8 18.9 Z"/><path d="M26 23.4 V38.4 A2 2 0 0 0 28 40.4 H40.6"/></svg>
<div class="t" style="top:1219.52px;font-size:28.5px;line-height:37px;color:#3a42cf;letter-spacing:0.311px;left:705.00px;">Unraveling the Mysteries of Quantu...</div>
<div class="b" style="left:1231px;top:1215px;width:296px;height:50px;border:2px solid #b9d7d1;border-radius:25px;background:#e8eeee"></div>
<div class="t" style="top:1223.24px;font-size:25px;line-height:32px;color:#3e706b;font-weight:700;left:1248.00px;">Nov 23 2023, 09:09</div>
<svg style="left:1471px;top:1215px" width="60" height="50" viewBox="0 0 60 50" fill="none" stroke="#3e706b" stroke-width="1.8" stroke-linecap="round" stroke-linejoin="round"><path d="M20.6 13.8 H28.3 L33.9 18.6 V29.9 A2 2 0 0 1 31.9 31.9 H20.6 A2 2 0 0 1 18.6 29.9 V15.8 A2 2 0 0 1 20.6 13.8 Z"/><path d="M14.2 18.5 V34 A2 2 0 0 0 16.2 36 H28.7"/></svg>
<div class="t" style="top:1219.52px;font-size:28.5px;line-height:37px;color:#2f3640;letter-spacing:-0.283px;left:1565.20px;">English</div>
<svg style="left:1670px;top:1220px" width="50" height="40" viewBox="0 0 50 40" fill="none" stroke="#2f3640" stroke-width="2" stroke-linecap="round" stroke-linejoin="round"><path d="M11.2 19.9 H40.4 M32.4 12 L40.6 19.9 L32.4 27.5"/></svg>
<div class="b" style="left:1732px;top:1210px;width:286px;height:60px;border-radius:30px;background:#f1f2fc"></div>
<div class="t" style="top:1219.52px;font-size:28.5px;line-height:37px;color:#101018;left:1757.00px;letter-spacing:0.1px;">4 target languages</div>
<div class="b" style="left:2112px;top:1220px;width:122px;height:40px;border-radius:20px;background:#1d8952"></div>
<svg style="left:2106px;top:1215px" width="60" height="50" viewBox="0 0 60 50"><circle cx="29.9" cy="25" r="8.9" fill="#fff"/><path d="M25.5 25 L28.6 28.2 L34.2 21.9" fill="none" stroke="#1d8952" stroke-width="2.3" stroke-linecap="round" stroke-linejoin="round"/></svg>
<div class="t" style="top:1224.08px;font-size:24px;line-height:31px;color:#fff;font-weight:700;letter-spacing:-0.500px;left:2157.80px;">Done</div>
<div class="t" style="top:1219.52px;font-size:28.5px;line-height:37px;color:#2f3640;right:264.80px;letter-spacing:0.3px;">$1 254.58</div>
<svg style="left:2700px;top:1210px" width="60" height="60" viewBox="0 0 60 60" fill="none" stroke="#3a3fd0" stroke-width="1.9" stroke-linecap="round" stroke-linejoin="round"><path d="M32 15.7 V35.3 M25.4 27.5 L32 35.3 L38.7 27.5 M17.8 37.4 V40.4 A3.5 3.5 0 0 0 21.3 43.9 H42.5 A3.5 3.5 0 0 0 46 40.4 V37.4"/></svg>
<div class="b" style="left:608px;top:1328px;width:64px;height:48px;border:2px solid #e6c8f2;border-radius:7px;background:#f6ebfb"></div>
<svg style="left:604px;top:1322px" width="72" height="60" viewBox="0 0 72 60" fill="none" stroke="#8c4caf" stroke-width="1.7" stroke-linecap="round" stroke-linejoin="round"><path d="M32.6 18.9 H40.4 L45.8 24.1 V34.7 A2 2 0 0 1 43.8 36.7 H32.8 A2 2 0 0 1 30.8 34.7 V20.9 A2 2 0 0 1 32.8 18.9 Z"/><path d="M26 23.4 V38.4 A2 2 0 0 0 28 40.4 H40.6"/></svg>
<div class="t" style="top:1331.52px;font-size:28.5px;line-height:37px;color:#3a42cf;letter-spacing:0.190px;left:705.00px;">CyberSavvy: Strengthening Your Def...</div>
<div class="b" style="left:1231px;top:1327px;width:296px;height:50px;border:2px solid #b9d7d1;border-radius:25px;background:#e8eeee"></div>
<div class="t" style="top:1335.24px;font-size:25px;line-height:32px;color:#3e706b;font-weight:700;left:1248.00px;">Nov 19 2023, 14:32</div>
<svg style="left:1471px;top:1327px" width="60" height="50" viewBox="0 0 60 50" fill="none" stroke="#3e706b" stroke-width="1.8" stroke-linecap="round" stroke-linejoin="round"><path d="M20.6 13.8 H28.3 L33.9 18.6 V29.9 A2 2 0 0 1 31.9 31.9 H20.6 A2 2 0 0 1 18.6 29.9 V15.8 A2 2 0 0 1 20.6 13.8 Z"/><path d="M14.2 18.5 V34 A2 2 0 0 0 16.2 36 H28.7"/></svg>
<div class="t" style="top:1331.52px;font-size:28.5px;line-height:37px;color:#2f3640;letter-spacing:-0.283px;left:1565.20px;">English</div>
<svg style="left:1670px;top:1332px" width="50" height="40" viewBox="0 0 50 40" fill="none" stroke="#2f3640" stroke-width="2" stroke-linecap="round" stroke-linejoin="round"><path d="M11.2 19.9 H40.4 M32.4 12 L40.6 19.9 L32.4 27.5"/></svg>
<div class="b" style="left:1732px;top:1322px;width:286px;height:60px;border-radius:30px;background:#f1f2fc"></div>
<div class="t" style="top:1331.52px;font-size:28.5px;line-height:37px;color:#101018;left:1757.00px;letter-spacing:0.1px;">4 target languages</div>
<div class="b" style="left:2112px;top:1332px;width:122px;height:40px;border-radius:20px;background:#1d8952"></div>
<svg style="left:2106px;top:1327px" width="60" height="50" viewBox="0 0 60 50"><circle cx="29.9" cy="25" r="8.9" fill="#fff"/><path d="M25.5 25 L28.6 28.2 L34.2 21.9" fill="none" stroke="#1d8952" stroke-width="2.3" stroke-linecap="round" stroke-linejoin="round"/></svg>
<div class="t" style="top:1336.08px;font-size:24px;line-height:31px;color:#fff;font-weight:700;letter-spacing:-0.500px;left:2157.80px;">Done</div>
<div class="t" style="top:1331.52px;font-size:28.5px;line-height:37px;color:#2f3640;right:264.80px;letter-spacing:0.3px;">$1 254.58</div>
<svg style="left:2700px;top:1322px" width="60" height="60" viewBox="0 0 60 60" fill="none" stroke="#3a3fd0" stroke-width="1.9" stroke-linecap="round" stroke-linejoin="round"><path d="M32 15.7 V35.3 M25.4 27.5 L32 35.3 L38.7 27.5 M17.8 37.4 V40.4 A3.5 3.5 0 0 0 21.3 43.9 H42.5 A3.5 3.5 0 0 0 46 40.4 V37.4"/></svg>
<div class="t" style="top:1439.64px;font-size:25px;line-height:32px;color:#333a44;letter-spacing:-0.259px;left:610.50px;">1-7 of 22 projects</div>
<div class="t" style="top:1439.14px;font-size:25px;line-height:32px;color:#333a44;left:2513.00px;">1</div>
<div class="t" style="top:1439.14px;font-size:25px;line-height:32px;color:#333a44;letter-spacing:-0.296px;left:2541.20px;">of 3 pages</div>
<svg style="left:2690px;top:1440px" width="80" height="32" viewBox="0 0 80 32" fill="none" stroke="#2f3640" stroke-width="1.9" stroke-linecap="round" stroke-linejoin="round"><path d="M19.6 4.6 L8.3 15.9 L19.6 27.7 M56.8 4.6 L67.5 15.9 L56.8 27.7"/></svg>
<script>(function(){var w=window.innerWidth;if(w&&Math.abs(w-2880)>2){document.documentElement.style.zoom=(w/2880);}})();</script>
</body>
</html>
